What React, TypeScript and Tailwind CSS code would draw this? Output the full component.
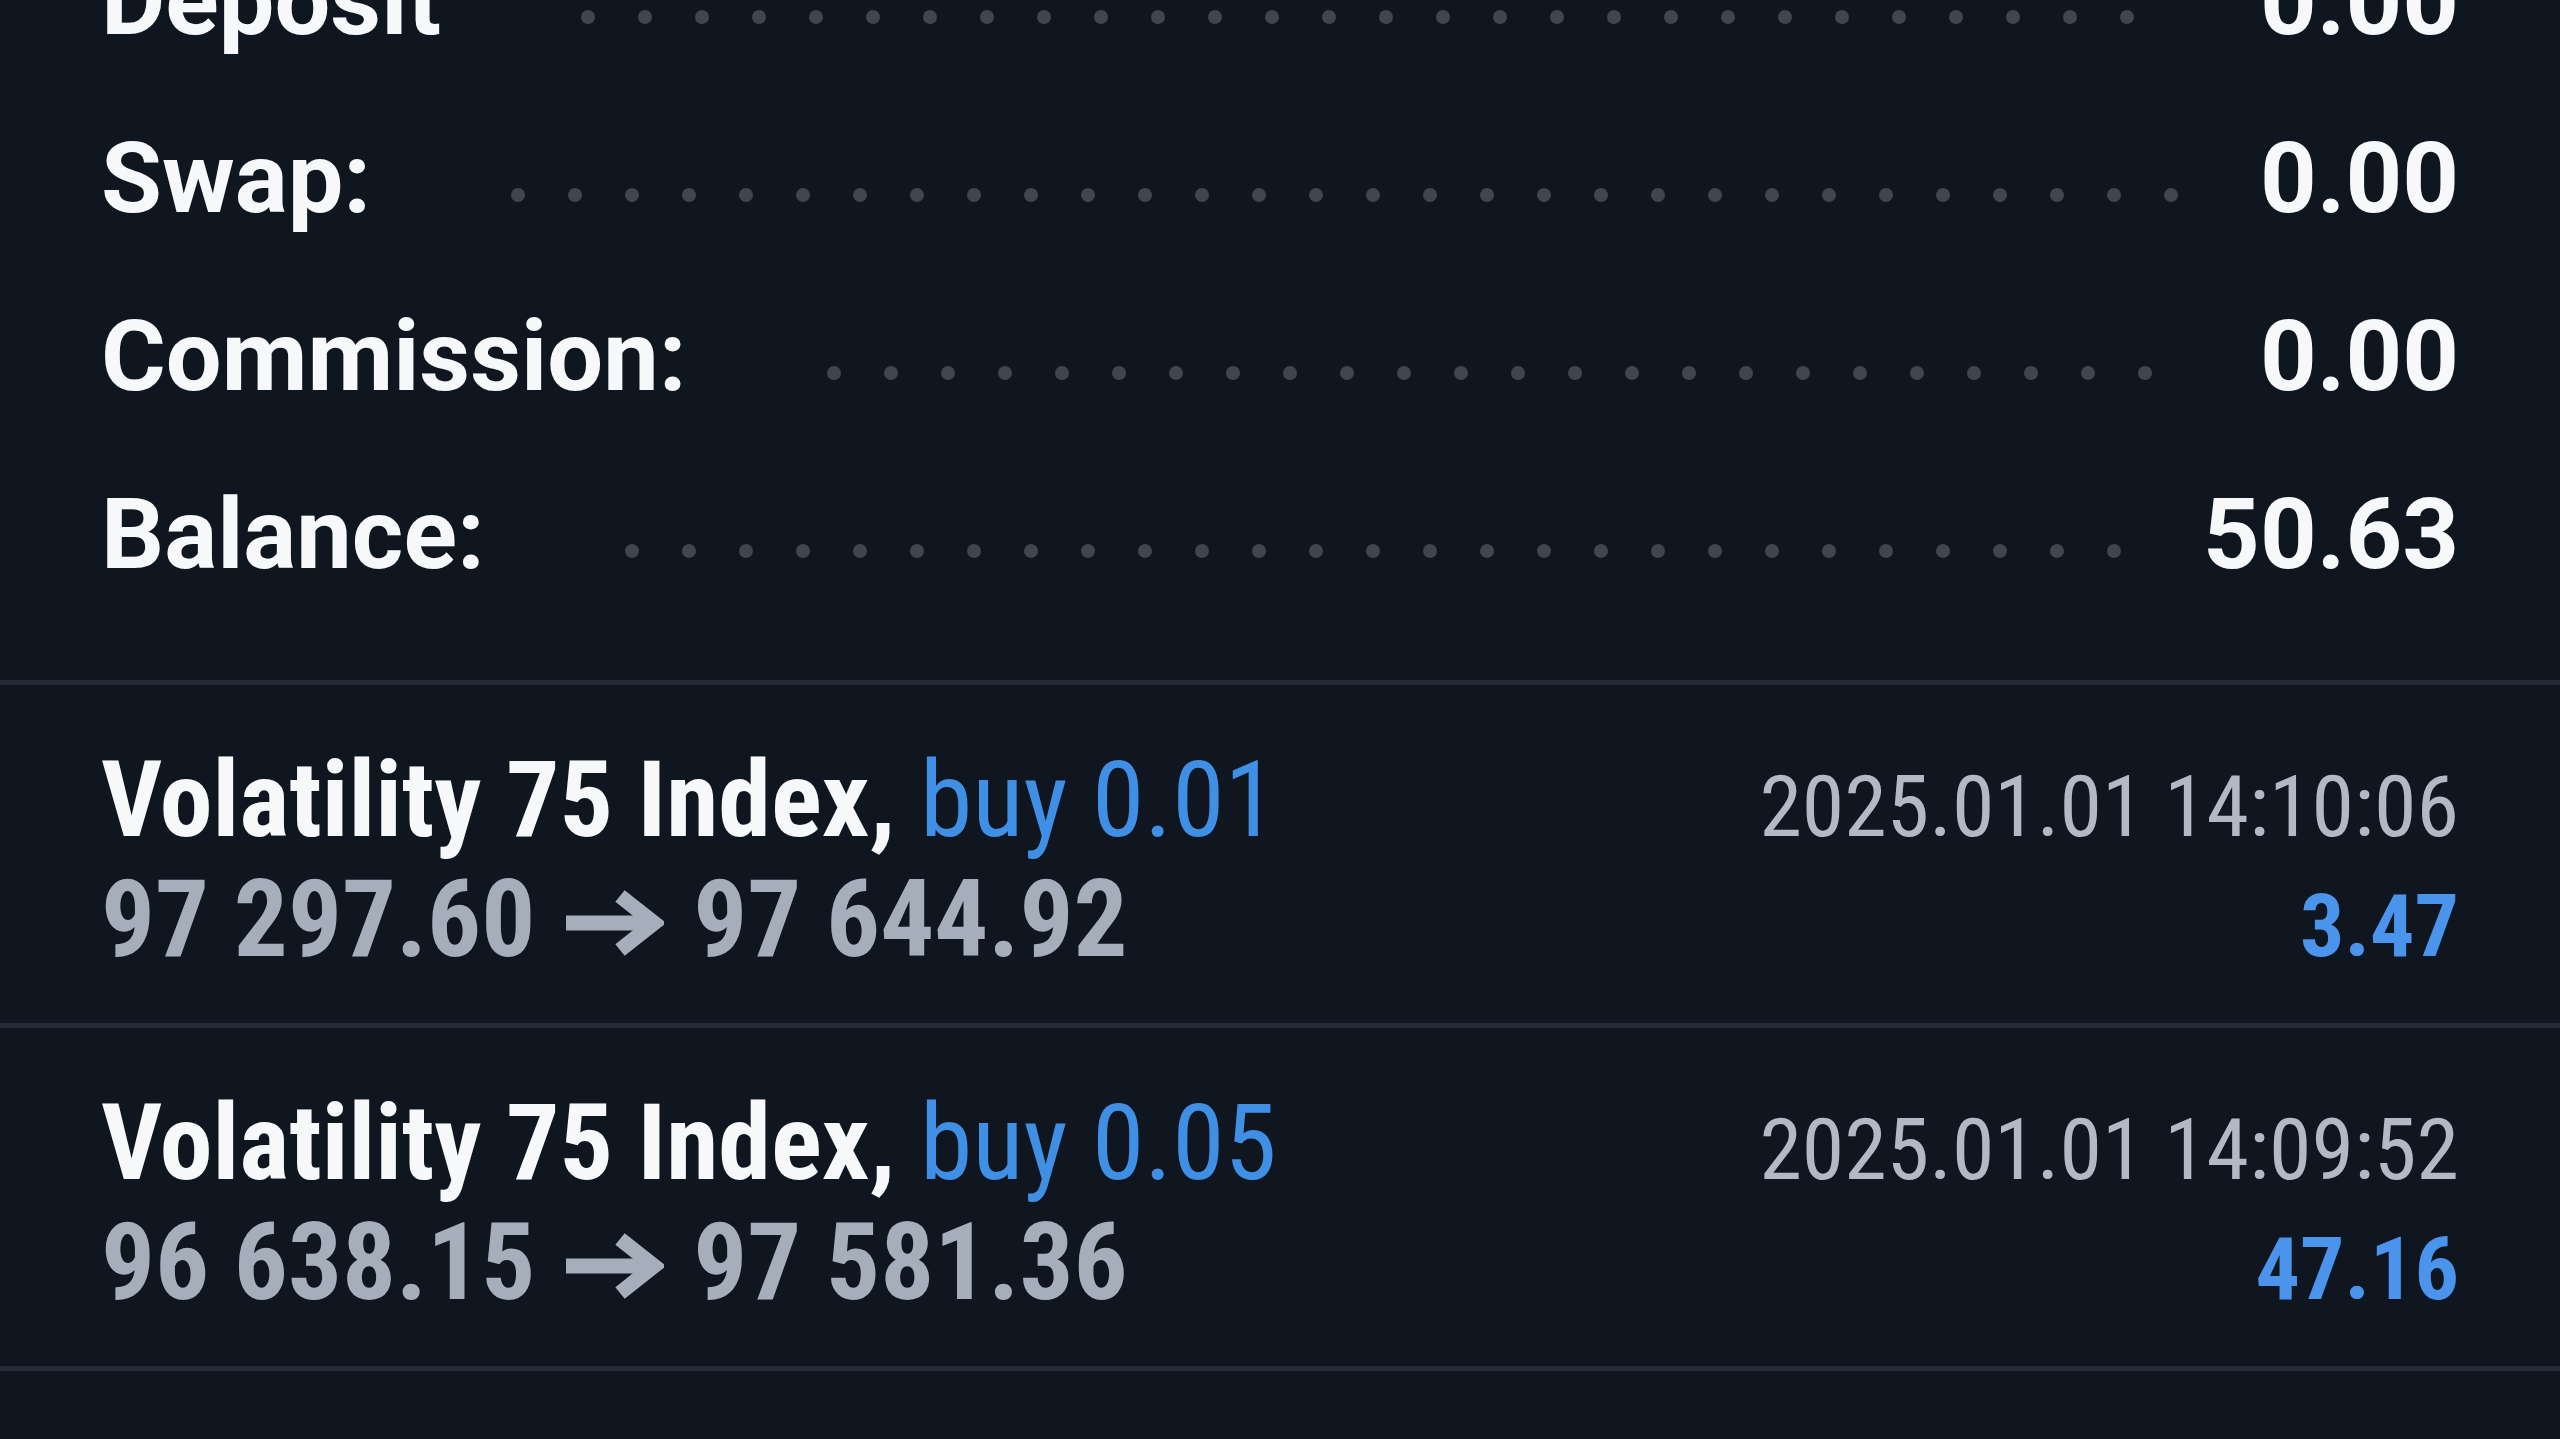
import React from 'react';

interface SummaryRow {
  label: string;
  value: string;
}

interface Deal {
  symbol: string;
  side: string;
  from: string;
  to: string;
  time: string;
  profit: string;
}

const SUMMARY: SummaryRow[] = [
  { label: 'Deposit', value: '0.00' },
  { label: 'Swap:', value: '0.00' },
  { label: 'Commission:', value: '0.00' },
  { label: 'Balance:', value: '50.63' },
];

const DEALS: Deal[] = [
  {
    symbol: 'Volatility 75 Index,',
    side: 'buy 0.01',
    from: '97 297.60',
    to: '97 644.92',
    time: '2025.01.01 14:10:06',
    profit: '3.47',
  },
  {
    symbol: 'Volatility 75 Index,',
    side: 'buy 0.05',
    from: '96 638.15',
    to: '97 581.36',
    time: '2025.01.01 14:09:52',
    profit: '47.16',
  },
];

const DOTS = Array.from({ length: 40 }, (_, i) => i);

// dotted leader: dots that don't fit wrap onto a hidden second line
const Leader = () => (
  <div className="flex-1 h-[14px] mt-[34px] ml-[140px] mr-[72px] flex flex-wrap gap-x-[43px] gap-y-[40px] overflow-hidden">
    {DOTS.map((i) => (
      <span key={i} className="w-[14px] h-[14px] rounded-full bg-[#40454f] shrink-0" />
    ))}
  </div>
);

const SummaryLine: React.FC<{ row: SummaryRow }> = ({ row }) => (
  <div className="flex items-center h-[178px]">
    <span className="text-[99px] leading-none font-bold text-[#f7f8fa] whitespace-nowrap">
      {row.label}
    </span>
    <Leader />
    <span className="text-[99px] leading-none font-bold text-[#f7f8fa] whitespace-nowrap">
      {row.value}
    </span>
  </div>
);

const Arrow = () => (
  <svg
    width="100"
    height="66"
    viewBox="0 0 100 66"
    className="inline-block align-baseline mx-[29px]"
    fill="none"
    stroke="#a6aebc"
    strokeWidth="15"
  >
    <path d="M2 33H90" />
    <path d="M56 6L90 33L56 60" strokeLinejoin="miter" />
  </svg>
);

const DealRow: React.FC<{ deal: Deal }> = ({ deal }) => (
  <div className="px-[101px] pt-[56px] pb-[44px] border-b-[5px] border-[#252b36] font-['Roboto_Condensed','Roboto',sans-serif]">
    <div className="flex items-baseline justify-between h-[119px] leading-[119px]">
      <span className="text-[106px] font-bold whitespace-nowrap">
        <span className="text-[#f7f8fa]">{deal.symbol} </span>
        <span className="text-[#3f8fe4] font-normal">{deal.side}</span>
      </span>
      <span className="text-[86px] text-[#b3b9c4] whitespace-nowrap">{deal.time}</span>
    </div>
    <div className="flex items-baseline justify-between h-[119px] leading-[119px]">
      <span className="text-[107px] font-bold text-[#a6aebc] whitespace-nowrap">
        {deal.from}
        <Arrow />
        {deal.to}
      </span>
      <span className="text-[88px] font-bold text-[#4a94ec] whitespace-nowrap">{deal.profit}</span>
    </div>
  </div>
);

export default function App() {
  return (
    <div className="w-[2560px] h-[1439px] overflow-hidden bg-[#10161f] font-['Roboto',sans-serif]">
      <div className="px-[101px] -mt-[89px] pb-[57px] border-b-[5px] border-[#252b36]">
        {SUMMARY.map((row) => (
          <SummaryLine key={row.label} row={row} />
        ))}
      </div>
      {DEALS.map((deal, i) => (
        <DealRow key={i} deal={deal} />
      ))}
    </div>
  );
}
